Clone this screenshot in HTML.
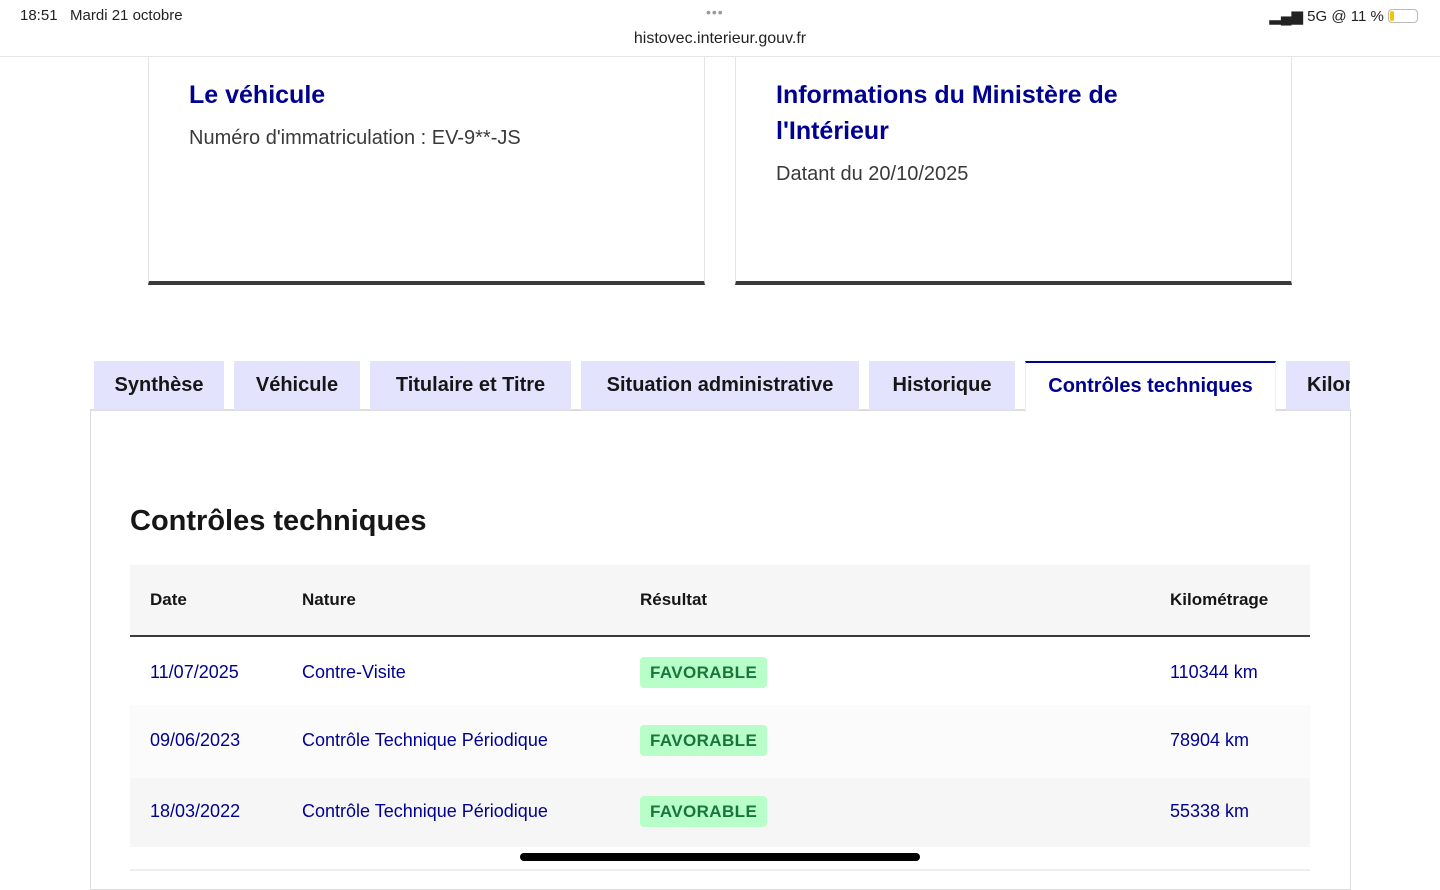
<!DOCTYPE html>
<html><head><meta charset="utf-8"><style>
*{margin:0;padding:0;box-sizing:border-box}
body{width:1440px;height:879px;overflow:hidden;background:#fff;font-family:"Liberation Sans",sans-serif;position:relative;color:#161616}
.abs{position:absolute}
.card{position:absolute;top:57px;height:228px;border:1px solid #e5e5e5;border-top:none;border-bottom:4px solid #3a3a3a;background:#fff}
.card h2{color:#000091;font-size:25px;font-weight:bold;line-height:36px}
.card p{color:#3a3a3a;font-size:20px;margin-top:16px}
.tab{position:absolute;top:361px;height:49px;background:#e3e3fd;font-size:20px;font-weight:bold;color:#161616;line-height:49px;text-align:center;white-space:nowrap;overflow:hidden}
.row{position:absolute;left:130px;width:1180px;font-size:18px;color:#000091}
.row span{position:absolute}
.badge{background:#b8fec9;color:#18753c;font-weight:bold;font-size:17px;letter-spacing:0.4px;padding:0 10px;border-radius:4px;line-height:31px}
</style></head><body>
<div class="abs" style="left:20px;top:7px;font-size:15px;color:#222">18:51&nbsp;&nbsp;&nbsp;Mardi 21 octobre</div>
<div class="abs" style="left:706px;top:4px;font-size:14px;color:#999;letter-spacing:1px">•••</div>
<div class="abs" style="left:0;width:1440px;top:30px;text-align:center;font-size:16px;color:#222">histovec.interieur.gouv.fr</div>
<div class="abs" style="right:22px;top:7px;font-size:15px;color:#222">▂▄▆ 5G @ 11 % <span style="display:inline-block;width:30px;height:14px;border:1px solid #bbb;border-radius:4px;vertical-align:-2px;position:relative"><span style="position:absolute;left:1px;top:1px;width:4px;height:10px;background:#f5c400;border-radius:2px"></span></span></div>
<div class="abs" style="left:0;top:56px;width:1440px;height:1px;background:#e5e5e5"></div>

<div class="card" style="left:148px;width:557px;padding:20px 40px"><h2>Le véhicule</h2><p style="margin-top:14px">Numéro d'immatriculation : EV-9**-JS</p></div>
<div class="card" style="left:735px;width:557px;padding:20px 150px 20px 40px"><h2>Informations du Ministère de l'Intérieur</h2><p style="margin-top:14px">Datant du 20/10/2025</p></div>

<div class="abs" style="left:90px;top:410px;width:1261px;height:480px;border:1px solid #ddd;border-top:none"></div>
<div class="abs" style="left:90px;top:409px;width:1261px;height:2px;background:#ddd"></div>
<div class="tab" style="left:94px;width:130px">Synthèse</div>
<div class="tab" style="left:234px;width:126px">Véhicule</div>
<div class="tab" style="left:370px;width:201px">Titulaire et Titre</div>
<div class="tab" style="left:581px;width:278px">Situation administrative</div>
<div class="tab" style="left:869px;width:146px">Historique</div>
<div class="tab" style="left:1025px;width:251px;background:#fff;color:#000091;border-top:2px solid #000091;height:51px;line-height:47px;border-left:1px solid #eee;border-right:1px solid #eee">Contrôles techniques</div>
<div class="tab" style="left:1286px;width:64px;text-align:left;padding-left:21px">Kilométrage</div>

<div class="abs" style="left:130px;top:505px;font-size:29px;font-weight:bold;color:#161616">Contrôles techniques</div>

<div class="abs" style="left:130px;top:565px;width:1180px;height:72px;background:#f6f6f6;border-bottom:2px solid #3a3a3a;font-size:17px;font-weight:bold">
<span class="abs" style="left:20px;top:25px">Date</span><span class="abs" style="left:172px;top:25px">Nature</span><span class="abs" style="left:510px;top:25px">Résultat</span><span class="abs" style="left:1040px;top:25px">Kilométrage</span></div>

<div class="row" style="top:637px;height:68px;background:#fff"><span style="left:20px;top:25px">11/07/2025</span><span style="left:172px;top:25px">Contre-Visite</span><span class="badge" style="left:510px;top:20px">FAVORABLE</span><span style="left:1040px;top:25px">110344 km</span></div>
<div class="row" style="top:705px;height:73px;background:#fbfbfb"><span style="left:20px;top:25px">09/06/2023</span><span style="left:172px;top:25px">Contrôle Technique Périodique</span><span class="badge" style="left:510px;top:20px">FAVORABLE</span><span style="left:1040px;top:25px">78904 km</span></div>
<div class="row" style="top:778px;height:69px;background:#f6f6f6"><span style="left:20px;top:23px">18/03/2022</span><span style="left:172px;top:23px">Contrôle Technique Périodique</span><span class="badge" style="left:510px;top:18px">FAVORABLE</span><span style="left:1040px;top:23px">55338 km</span></div>
<div class="abs" style="left:130px;top:869px;width:1180px;height:2px;background:#eee"></div>
<div class="abs" style="left:520px;top:853px;width:400px;height:8px;border-radius:4px;background:#000"></div>
</body></html>
